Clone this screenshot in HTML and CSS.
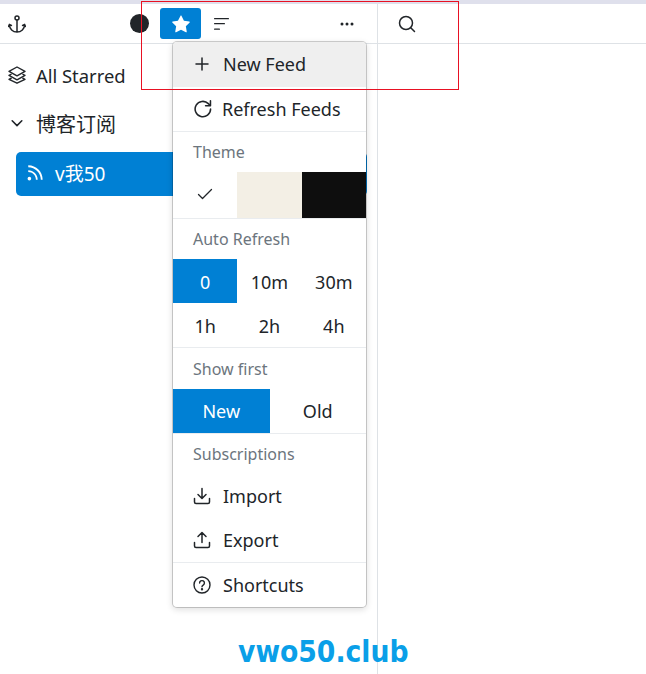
FILE: index.html
```html
<!DOCTYPE html>
<html lang="en">
<head>
<meta charset="UTF-8">
<meta name="viewport" content="width=device-width, initial-scale=1.0">
<title>Feeds</title>
<link rel="stylesheet" href="styles.css">
</head>
<body>
  <div class="topstrip"></div>
  <div class="app">
    <div class="main">
      <div class="toolbar">
        <svg class="anchor" width="18" height="18" viewBox="0 0 18 18" fill="none" stroke="#212529" stroke-width="1.5" stroke-linecap="round"><circle cx="9" cy="3" r="2"/><path d="M9 5V17M1.400 9.500C1.400 14 4.800 17 9 17s7.600-3 7.600-7.500M.5 11.500l.9-2 2 1M17.500 11.500l-.9-2-2 1"/></svg>
        <span class="dot"></span>
        <span class="star-btn">
          <svg width="18" height="18" viewBox="0 0 16 16" fill="#fff"><path d="M3.600 15.400c-.4.2-.8-.2-.7-.7l.8-4.700L.3 6.700c-.3-.3-.2-.9.3-1l4.700-.7L7.500.8c.2-.4.8-.4 1 0l2.100 4.300 4.800.6c.4.1.6.7.3 1L12.300 10l.8 4.700c.1.5-.3.9-.7.7L8 13.200z"/></svg>
        </span>
        <svg class="sort" width="16" height="16" viewBox="0 0 16 16" fill="#212529"><rect x="0" y="2" width="15" height="1.300" rx=".6"/><rect x="0" y="7" width="11" height="1.300" rx=".6"/><rect x="0" y="12.500" width="6" height="1.300" rx=".6"/></svg>
        <svg class="more" width="16" height="16" viewBox="0 0 16 16" fill="#212529"><circle cx="3" cy="8" r="1.500"/><circle cx="8" cy="8" r="1.500"/><circle cx="13" cy="8" r="1.500"/></svg>
      </div>
      <div class="sidebar">
        <div class="row starred">
          <svg width="18" height="18" viewBox="0 0 18 18" fill="none" stroke="#212529" stroke-width="1.400" stroke-linejoin="round"><path d="M9 1 17 5.400 9 9.800 1 5.400z"/><path d="M3.600 8 1 9.400l8 4.400 8-4.400L14.400 8"/><path d="M3.600 12 1 13.300l8 3.900 8-3.900L14.400 12"/></svg>
          <span>All Starred</span>
        </div>
        <div class="row group">
          <svg width="14" height="14" viewBox="0 0 16 16" fill="none" stroke="#212529" stroke-width="1.800" stroke-linecap="round" stroke-linejoin="round"><path d="M2.500 5.500 8 11 13.500 5.500"/></svg>
          <span>博客订阅</span>
        </div>
        <div class="feed">
          <svg width="18" height="18" viewBox="0 0 16 16" fill="#fff"><circle cx="3" cy="13" r="1.600"/><path d="M2 7.200V5.600c4.600 0 8.400 3.800 8.400 8.400H8.800C8.800 10.200 5.800 7.200 2 7.200zM2 2.800V1.200c7.100 0 12.800 5.700 12.800 12.800h-1.600C13.200 7.800 8.200 2.800 2 2.800z"/></svg>
          <span>v我50</span>
        </div>
      </div>
    </div>
    <div class="search-col">
      <div class="search-bar">
        <svg width="18" height="18" viewBox="0 0 18 18" fill="none" stroke="#212529" stroke-width="1.500" stroke-linecap="round"><circle cx="8" cy="8" r="6.500"/><path d="M13 13l3.500 3.500"/></svg>
      </div>
    </div>
  </div>

  <div class="menu">
    <div class="item hover">
      <svg width="18" height="18" viewBox="0 0 18 18" fill="none" stroke="#212529" stroke-width="1.500" stroke-linecap="round"><path d="M9 3v12M3 9h12"/></svg>
      New Feed
    </div>
    <div class="item refresh line">
      <svg width="19" height="19" viewBox="0 0 16 16" fill="none" stroke="#212529" stroke-width="1.300" stroke-linecap="round" stroke-linejoin="round"><path d="M14.800 8.500A6.500 6.500 0 1 1 12.900 3.900L14.300 5.300"/><path d="M14.700 1.500V5.600H10.600"/></svg>
      Refresh Feeds
    </div>
    <div class="label">Theme</div>
    <div class="cols3 line">
      <div class="cell theme">
        <svg width="16" height="16" viewBox="0 0 16 16" fill="none" stroke="#212529" stroke-width="1.300" stroke-linecap="round" stroke-linejoin="round"><path d="M1.500 8.500 5.500 12.500 14.500 3.500"/></svg>
      </div>
      <div class="cell theme sepia"></div>
      <div class="cell theme dark"></div>
    </div>
    <div class="label">Auto Refresh</div>
    <div class="cols3 line">
      <div class="cell time on">0</div>
      <div class="cell time">10m</div>
      <div class="cell time">30m</div>
      <div class="cell time">1h</div>
      <div class="cell time">2h</div>
      <div class="cell time">4h</div>
    </div>
    <div class="label tall">Show first</div>
    <div class="cols2 line">
      <div class="cell on">New</div>
      <div class="cell">Old</div>
    </div>
    <div class="label subs">Subscriptions</div>
    <div class="item">
      <svg width="18" height="18" viewBox="0 0 18 18" fill="none" stroke="#212529" stroke-width="1.500" stroke-linecap="round" stroke-linejoin="round"><path d="M9 1.500V11M5 7.500 9 11.500 13 7.500M1.500 11.500V15a1.500 1.500 0 0 0 1.500 1.500h12a1.500 1.500 0 0 0 1.500-1.500v-3.500"/></svg>
      Import
    </div>
    <div class="item line">
      <svg width="18" height="18" viewBox="0 0 18 18" fill="none" stroke="#212529" stroke-width="1.500" stroke-linecap="round" stroke-linejoin="round"><path d="M9 11.500V2M5 5.500 9 1.500 13 5.500M1.500 11.500V15a1.500 1.500 0 0 0 1.500 1.500h12a1.500 1.500 0 0 0 1.500-1.500v-3.500"/></svg>
      Export
    </div>
    <div class="item last">
      <svg width="18" height="18" viewBox="0 0 18 18" fill="none" stroke="#212529" stroke-width="1.400" stroke-linecap="round"><circle cx="9" cy="9" r="8"/><path d="M6.600 7a2.400 2.400 0 1 1 3.600 2.100c-.8.500-1.200.9-1.200 1.700"/><circle cx="9" cy="13.200" r=".5" fill="#212529"/></svg>
      Shortcuts
    </div>
  </div>

  <div class="redbox"></div>
  <div class="watermark">vwo50.club</div>
</body>
</html>
```

FILE: styles.css
```css
* {
  box-sizing: border-box;
}

html, body {
  height: 100%;
}

body {
  margin: 0;
  overflow: hidden;
  background: #fff;
  color: #212529;
  font-family: "Noto Sans", "Noto Sans CJK SC", sans-serif;
  font-size: 18px;
}

svg {
  display: block;
  flex: none;
}

.topstrip {
  height: 4px;
  background: #dfe0ec;
}

.app {
  display: flex;
  height: 670px;
}

.main {
  width: 378px;
  border-right: 1px solid #dee2e6;
}

.toolbar {
  display: flex;
  align-items: center;
  height: 40px;
  border-bottom: 1px solid #dee2e6;
  padding-left: 8px;
}

.dot {
  width: 19px;
  height: 19px;
  margin-left: 104px;
  border-radius: 50%;
  background: #212529;
}

.star-btn {
  display: flex;
  align-items: center;
  justify-content: center;
  width: 41px;
  height: 31px;
  margin-left: 11px;
  border-radius: 3px;
  background: #0080d4;
}

.sort {
  margin-left: 13px;
}

.more {
  margin-left: 109px;
}

.sidebar {
  padding: 8px 10px 0 8px;
}

.row {
  display: flex;
  align-items: center;
  gap: 10px;
  height: 48px;
}

.starred {
  padding-bottom: 2px;
  font-size: 18.4px;
}

.group {
  gap: 12px;
  padding: 0 0 2px 2px;
  font-size: 20px;
}

.feed {
  display: flex;
  align-items: center;
  gap: 11px;
  width: 351px;
  height: 44px;
  margin: 4px 0 0 8px;
  padding: 0 0 2px 10px;
  border-radius: 5px;
  background: #0080d4;
  color: #fff;
  font-size: 19px;
}

.search-bar {
  display: flex;
  align-items: center;
  width: 269px;
  height: 40px;
  padding-left: 20px;
  border-bottom: 1px solid #dee2e6;
}

.menu {
  position: absolute;
  left: 172px;
  top: 41px;
  width: 195px;
  border: 1px solid rgba(0, 0, 0, 0.18);
  border-radius: 5px;
  background: #fff;
  background-clip: padding-box;
  box-shadow: 0 2px 6px rgba(0, 0, 0, 0.12);
}

.item {
  display: flex;
  align-items: center;
  gap: 12px;
  height: 44px;
  padding: 0 0 2px 20px;
}

.refresh {
  gap: 10px;
}

.hover {
  height: 46px;
  background: #efefef;
  border-radius: 4px 4px 0 0;
  box-shadow: inset 0 -1px 0 #fff;
}

.line {
  border-bottom: 1px solid #e9ecef;
}

.last {
  padding-bottom: 0;
}

.label {
  height: 40px;
  padding: 9px 0 0 20px;
  font-size: 16px;
  color: #6c757d;
}

.tall {
  height: 41px;
  padding-top: 10px;
}

.subs {
  height: 41px;
}

.cols3 {
  display: grid;
  grid-template-columns: repeat(3, 1fr);
}

.cols2 {
  display: grid;
  grid-template-columns: repeat(2, 1fr);
}

.cell {
  display: flex;
  align-items: center;
  justify-content: center;
  height: 44px;
}

.time {
  padding-top: 2px;
}

.theme {
  height: 46px;
  padding-bottom: 2px;
}

.sepia {
  background: #f3efe5;
}

.dark {
  background: #0e0e0e;
}

.on {
  background: #0080d4;
  color: #fff;
}

.redbox {
  position: absolute;
  left: 141px;
  top: 1px;
  width: 318px;
  height: 89px;
  border: 1px solid #e81123;
  pointer-events: none;
}

.watermark {
  position: absolute;
  left: 238px;
  top: 633px;
  font-family: "DejaVu Sans", sans-serif;
  font-size: 31px;
  font-weight: bold;
  color: #0a9fe8;
  transform: scaleX(0.86);
  transform-origin: left center;
}
```
